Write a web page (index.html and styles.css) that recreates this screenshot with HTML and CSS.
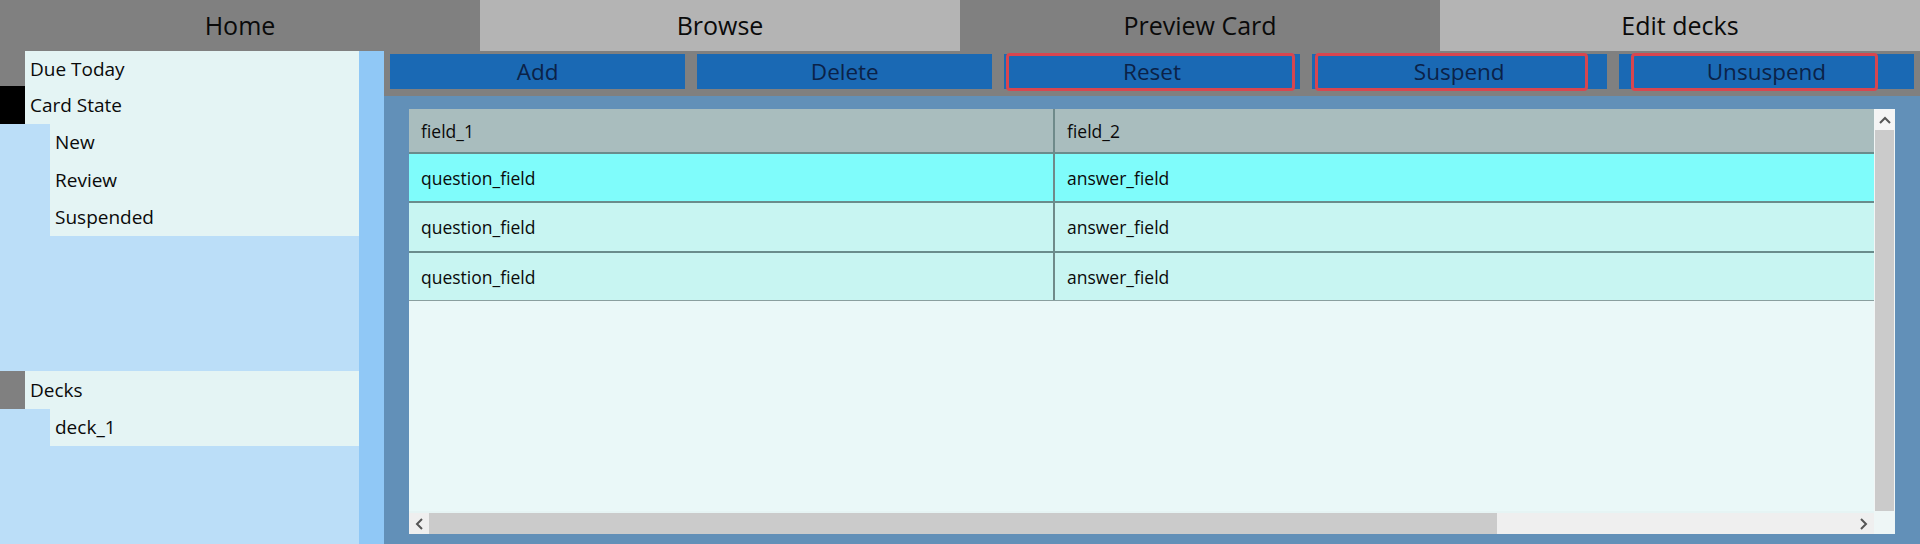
FILE: index.html
```html
<!DOCTYPE html>
<html>
<head>
<meta charset="utf-8">
<link rel="stylesheet" href="styles.css">
</head>
<body>
<div class="app">
  <div class="tabs">
    <div class="tab dark">Home</div>
    <div class="tab light">Browse</div>
    <div class="tab dark">Preview Card</div>
    <div class="tab light">Edit decks</div>
  </div>
  <div class="content">
    <div class="sidebar">
      <div class="item top first"><span class="mark gray"></span><span class="label">Due Today</span></div>
      <div class="item top"><span class="mark black"></span><span class="label">Card State</span></div>
      <div class="item sub"><span class="label">New</span></div>
      <div class="item sub"><span class="label">Review</span></div>
      <div class="item sub"><span class="label">Suspended</span></div>
      <div class="spacer"></div>
      <div class="item top"><span class="mark gray"></span><span class="label">Decks</span></div>
      <div class="item sub"><span class="label">deck_1</span></div>
    </div>
    <div class="splitter"></div>
    <div class="main">
      <div class="toolbar">
        <div class="btn">Add</div>
        <div class="btn">Delete</div>
        <div class="btn"><span class="ring ring-reset"></span>Reset</div>
        <div class="btn"><span class="ring ring-suspend"></span>Suspend</div>
        <div class="btn"><span class="ring ring-unsuspend"></span>Unsuspend</div>
      </div>
      <div class="gridwrap">
        <div class="grid">
          <div class="data">
            <div class="row head"><div class="cell c1">field_1</div><div class="cell c2">field_2</div></div>
            <div class="row sel"><div class="cell c1">question_field</div><div class="cell c2">answer_field</div></div>
            <div class="row"><div class="cell c1">question_field</div><div class="cell c2">answer_field</div></div>
            <div class="row last"><div class="cell c1">question_field</div><div class="cell c2">answer_field</div></div>
          </div>
          <div class="vscroll">
            <div class="arrow up"><svg width="12" height="8" viewBox="0 0 12 8"><path d="M1 7 L6 2 L11 7" fill="none" stroke="#555" stroke-width="2"/></svg></div>
            <div class="vthumb"></div>
          </div>
          <div class="hscroll">
            <div class="arrow left"><svg width="8" height="12" viewBox="0 0 8 12"><path d="M7 1 L2 6 L7 11" fill="none" stroke="#555" stroke-width="2"/></svg></div>
            <div class="hthumb"></div>
            <div class="htrack"></div>
            <div class="arrow right"><svg width="8" height="12" viewBox="0 0 8 12"><path d="M1 1 L6 6 L1 11" fill="none" stroke="#555" stroke-width="2"/></svg></div>
          </div>
          <div class="corner"></div>
        </div>
      </div>
    </div>
  </div>
</div>
</body>
</html>
```

FILE: styles.css
```css
* { box-sizing: border-box; }
html, body {
  margin: 0;
  padding: 0;
  width: 1920px;
  height: 544px;
  overflow: hidden;
  font-family: "Open Sans", "Noto Sans", sans-serif;
  color: #0a0a0a;
}
.app {
  display: flex;
  flex-direction: column;
  width: 1920px;
  height: 544px;
}
.tabs {
  display: grid;
  grid-template-columns: repeat(4, 1fr);
  height: 51px;
  flex: none;
}
.tab {
  display: flex;
  align-items: center;
  justify-content: center;
  font-size: 25px;
  color: #0a0a0a;
  padding-bottom: 2px;
}
.tab.dark { background: #808080; }
.tab.light { background: #b4b4b4; }

.content {
  flex: 1;
  display: flex;
  min-height: 0;
}
.sidebar {
  width: 359px;
  flex: none;
  background: #bbdef8;
  display: flex;
  flex-direction: column;
}
.item {
  display: flex;
  align-items: center;
  height: 37.5px;
  flex: none;
  font-size: 19px;
}
.item.first { height: 35px; }
.item .label {
  flex: 1;
  align-self: stretch;
  display: flex;
  align-items: center;
  background: #e4f4f4;
  padding-left: 5px;
}
.item.top .mark {
  width: 25px;
  align-self: stretch;
  flex: none;
}
.mark.gray { background: #808080; }
.mark.black { background: #000; }
.item.sub { padding-left: 50px; }
.spacer { height: 135px; flex: none; }

.splitter {
  width: 25px;
  flex: none;
  background: #90c8f6;
}
.main {
  flex: 1;
  display: flex;
  flex-direction: column;
  background: #6290b8;
  min-width: 0;
}
.toolbar {
  height: 45px;
  flex: none;
  background: #808080;
  display: flex;
  gap: 12px;
  padding: 3px 6px 7px 6px;
}
.btn {
  flex: 1;
  position: relative;
  background: #1a69b4;
  display: flex;
  align-items: center;
  justify-content: center;
  font-size: 22.5px;
  color: #0b2248;
  padding-bottom: 1px;
}
.ring {
  position: absolute;
  top: -1px;
  bottom: -2px;
  border: 3px solid #d8464f;
  border-radius: 4px;
}
.ring-reset { left: 2px; right: 5px; }
.ring-suspend { left: 3px; right: 19px; }
.ring-unsuspend { left: 12px; right: 36px; }

.gridwrap {
  flex: 1;
  padding: 13px 25px 10px 25px;
  min-height: 0;
}
.grid {
  height: 100%;
  display: grid;
  grid-template-columns: 1fr 21px;
  grid-template-rows: 1fr 23px;
  background: #eaf8f8;
}
.data {
  overflow: hidden;
}
.row {
  display: flex;
  height: 50px;
  border-bottom: 2px solid #6a8c8c;
  background: #c8f5f2;
  font-size: 17.5px;
}
.row.head {
  height: 45px;
  background: #a9bdbe;
}
.row.sel { background: #7ffcfb; height: 49px; }
.row.last { border-bottom: 1px solid #8a9f9f; height: 48px; }
.cell {
  display: flex;
  align-items: center;
  padding-left: 12px;
}
.c1 {
  width: 646px;
  border-right: 2px solid #6f8a8a;
}
.c2 { flex: 1; padding-left: 12px; }

.vscroll {
  background: #cbcbcb;
  border: 1px solid #f2f6f6;
  border-bottom: none;
  display: flex;
  flex-direction: column;
}
.arrow {
  display: flex;
  align-items: center;
  justify-content: center;
  background: #f4f4f4;
}
.arrow.up { height: 20px; }
.vthumb { flex: 1; background: #cbcbcb; }
.hscroll {
  display: flex;
  background: #efefef;
  border-top: 2px solid #e6f4f4;
}
.arrow.left, .arrow.right { width: 20px; background: #efefef; }
.hthumb { width: 1068px; background: #cbcbcb; }
.htrack { flex: 1; background: #efefef; }
.corner { background: #eef6f6; }
```
